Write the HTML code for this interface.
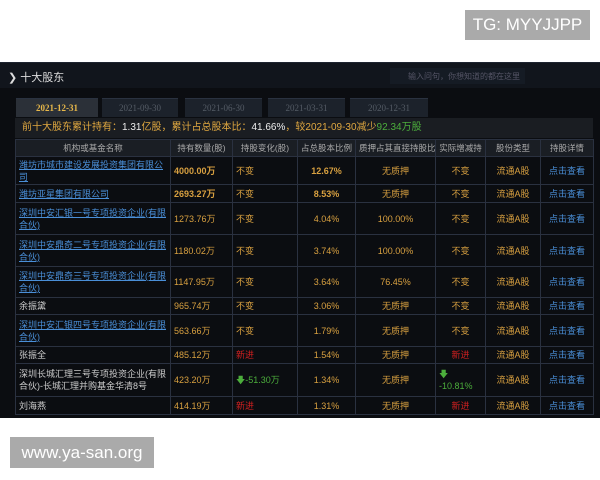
<!DOCTYPE html>
<html><head><meta charset="utf-8"><style>
*{margin:0;padding:0;box-sizing:border-box}
body{width:600px;height:480px;background:#fff;position:relative;overflow:hidden;font-family:"Liberation Sans","Noto Sans CJK SC",sans-serif}
.badge{position:absolute;background:#aaa;color:#fff;font-size:17px;display:flex;align-items:center;justify-content:center}
.dark{position:absolute;left:0;top:62px;width:600px;height:356px;background:#0b0d11;overflow:hidden}
.hdr{position:absolute;left:0;top:0;width:600px;height:26px;background:#11151c;border-top:1px solid #1e2430}
.hdr .t{position:absolute;left:8px;top:6px;color:#ddd;font-size:11px}
.search{position:absolute;left:390px;top:5px;width:135px;height:16px;background:#151b24;color:#556;font-size:8px;padding:3px 0 0 18px;white-space:nowrap;overflow:hidden}
.tab{position:absolute;top:36px;height:19px;background:#1c222b;color:#555c66;font-size:9px;text-align:center;line-height:19px;font-family:"Liberation Serif",serif;border-top:1px solid #2a3240}
.tab.a{background:#2b3038;color:#e8b84a;font-weight:bold}
.sum{position:absolute;left:15px;top:56px;width:578px;height:20px;background:#1a1d22;font-size:10px;color:#e0a840;line-height:20px;padding-left:7px;white-space:nowrap}
table{position:absolute;left:15px;top:77px;border-collapse:collapse;width:578px;font-size:9px;table-layout:fixed}
td,th{border:1px solid #2a3140;color:#d8a040;text-align:center;line-height:12px;padding:0 3px;overflow:hidden}
th{background:#1a1e24;color:#aaa;font-weight:normal;height:17px;white-space:nowrap;font-size:8.5px}
td.n{text-align:left;color:#4a8fd8;text-decoration:underline}
td.w{text-align:left;color:#ccc;text-decoration:none}
td.b{font-weight:bold}
td.l{text-align:left}
.r{color:#d02020}.g{color:#4cae3c}.bl{color:#4a8fd8}
</style></head><body>
<div class="badge" style="left:465px;top:10px;width:125px;height:30px">TG: MYYJJPP</div>
<div class="dark">
<div class="hdr"><span class="t">❯ 十大股东</span><div class="search">输入问句，你想知道的都在这里</div></div>
<div class="tab a" style="left:16px;width:82px">2021-12-31</div>
<div class="tab" style="left:102px;width:76px">2021-09-30</div>
<div class="tab" style="left:185px;width:77px">2021-06-30</div>
<div class="tab" style="left:268px;width:77px">2021-03-31</div>
<div class="tab" style="left:350px;width:78px">2020-12-31</div>
<div class="sum">前十大股东累计持有：<span style="color:#eee">1.31</span>亿股，累计占总股本比：<span style="color:#eee">41.66%</span>，较2021-09-30减少<span class="g">92.34万股</span></div>
<table>
<colgroup><col style="width:155px"><col style="width:62px"><col style="width:65px"><col style="width:58px"><col style="width:80px"><col style="width:50px"><col style="width:55px"><col style="width:53px"></colgroup>
<tr style="height:17px"><th>机构或基金名称</th><th>持有数量(股)</th><th>持股变化(股)</th><th>占总股本比例</th><th>质押占其直接持股比</th><th>实际增减持</th><th>股份类型</th><th>持股详情</th></tr>
<tr style="height:28px"><td class="n">潍坊市城市建设发展投资集团有限公司</td><td class="b l">4000.00万</td><td class="l">不变</td><td class="b">12.67%</td><td>无质押</td><td>不变</td><td>流通A股</td><td class="bl">点击查看</td></tr>
<tr style="height:18px"><td class="n">潍坊亚星集团有限公司</td><td class="b l">2693.27万</td><td class="l">不变</td><td class="b">8.53%</td><td>无质押</td><td>不变</td><td>流通A股</td><td class="bl">点击查看</td></tr>
<tr style="height:32px"><td class="n">深圳中安汇银一号专项投资企业(有限合伙)</td><td class="l">1273.76万</td><td class="l">不变</td><td>4.04%</td><td>100.00%</td><td>不变</td><td>流通A股</td><td class="bl">点击查看</td></tr>
<tr style="height:32px"><td class="n">深圳中安鼎奇二号专项投资企业(有限合伙)</td><td class="l">1180.02万</td><td class="l">不变</td><td>3.74%</td><td>100.00%</td><td>不变</td><td>流通A股</td><td class="bl">点击查看</td></tr>
<tr style="height:31px"><td class="n">深圳中安鼎奇三号专项投资企业(有限合伙)</td><td class="l">1147.95万</td><td class="l">不变</td><td>3.64%</td><td>76.45%</td><td>不变</td><td>流通A股</td><td class="bl">点击查看</td></tr>
<tr style="height:17px"><td class="w">余振黛</td><td class="l">965.74万</td><td class="l">不变</td><td>3.06%</td><td>无质押</td><td>不变</td><td>流通A股</td><td class="bl">点击查看</td></tr>
<tr style="height:32px"><td class="n">深圳中安汇银四号专项投资企业(有限合伙)</td><td class="l">563.66万</td><td class="l">不变</td><td>1.79%</td><td>无质押</td><td>不变</td><td>流通A股</td><td class="bl">点击查看</td></tr>
<tr style="height:17px"><td class="w">张振全</td><td class="l">485.12万</td><td class="l r">新进</td><td>1.54%</td><td>无质押</td><td class="r">新进</td><td>流通A股</td><td class="bl">点击查看</td></tr>
<tr style="height:33px"><td class="w">深圳长城汇理三号专项投资企业(有限合伙)-长城汇理并购基金华清8号</td><td class="l">423.20万</td><td class="l g">🡇-51.30万</td><td>1.34%</td><td>无质押</td><td class="l g">🡇<br>-10.81%</td><td>流通A股</td><td class="bl">点击查看</td></tr>
<tr style="height:18px"><td class="w">刘海燕</td><td class="l">414.19万</td><td class="l r">新进</td><td>1.31%</td><td>无质押</td><td class="r">新进</td><td>流通A股</td><td class="bl">点击查看</td></tr>
</table>
</div>
<div class="badge" style="left:10px;top:437px;width:144px;height:31px">www.ya-san.org</div>
</body></html>
